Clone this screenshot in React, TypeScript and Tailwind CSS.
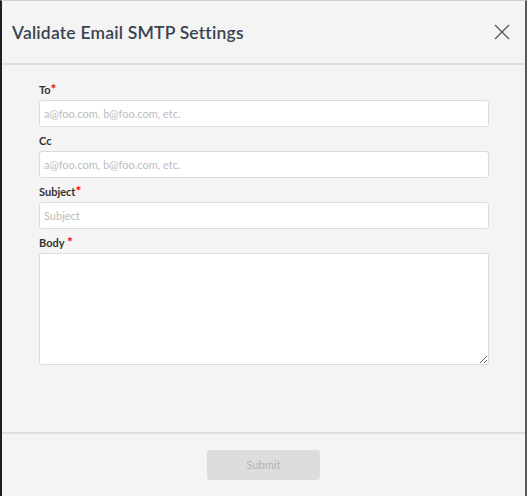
import React from "react";

const fields = [
  { label: "To", required: true, placeholder: "a@foo.com, b@foo.com, etc." },
  { label: "Cc", required: false, placeholder: "a@foo.com, b@foo.com, etc." },
  { label: "Subject", required: true, placeholder: "Subject" },
];

const App = () => {
  return (
    <div className="w-[527px] h-[496px] flex flex-col bg-[#f4f4f4] border-t border-t-[#cfcfcf] border-l-2 border-l-[#1e1e1e] border-r-2 border-r-[#5a5a5a] font-['Lato','Noto_Sans',sans-serif] text-[#333]">
      {/* Header */}
      <div className="h-[64px] shrink-0 flex items-center justify-between pl-[10px] pr-[15px] border-b-2 border-b-[#dedede]">
        <h1 className="text-[17.5px] font-semibold text-[#3b4350] tracking-[0.2px] pt-[2px]">
          Validate Email SMTP Settings
        </h1>
        <button className="w-[16px] h-[16px] flex items-center justify-center">
          <svg width="16" height="16" viewBox="0 0 16 16" fill="none">
            <path d="M1 1 L15 15 M15 1 L1 15" stroke="#555" strokeWidth="1.3" />
          </svg>
        </button>
      </div>

      {/* Body */}
      <div className="flex-1 pt-[18px] pl-[37px] pr-[36px] flex flex-col gap-[7px]">
        {fields.map((f) => (
          <div key={f.label} className="flex flex-col">
            <label className="h-[14px] mb-[3px] text-[11px] font-bold leading-[14px] text-[#333]">
              {f.label}
              {f.required && <span className="text-[#ff0000] text-[14px] leading-[0]">*</span>}
            </label>
            <input
              className="h-[27px] bg-white border border-[#dcdcdc] rounded-[3px] px-[4px] text-[11px] placeholder:text-[#bdbdbd] outline-none"
              placeholder={f.placeholder}
            />
          </div>
        ))}
        <div className="flex flex-col">
          <label className="h-[14px] mb-[3px] text-[11px] font-bold leading-[14px] text-[#333]">
            Body <span className="text-[#ff0000] text-[14px] leading-[0]">*</span>
          </label>
          <textarea className="h-[112px] bg-white border border-[#dcdcdc] rounded-[2px] outline-none p-1 text-[11px]" />
        </div>
      </div>

      {/* Footer */}
      <div className="h-[64px] shrink-0 border-t-2 border-t-[#dedede] flex justify-center pt-[16px]">
        <button
          disabled
          className="w-[113px] h-[30px] rounded-[3px] bg-[#dddddd] text-[11px] text-[#b3b3b3]"
        >
          Submit
        </button>
      </div>
    </div>
  );
};

export default App;
